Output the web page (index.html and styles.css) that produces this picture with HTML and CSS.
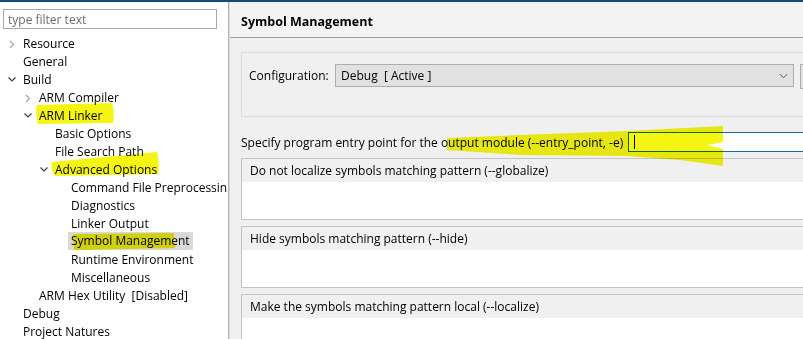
FILE: index.html
```html
<!DOCTYPE html>
<html lang="en">
   <head>
      <meta charset="UTF-8">
      <title>Properties - Symbol Management</title>
      <link rel="stylesheet" href="styles.css">
   </head>
   <body>
      <div class="window">
         <aside class="sidebar">
            <div class="filter">type filter text</div>
            <ul class="tree">
               <li class="node lvl0"><span class="twisty closed"><svg viewBox="0 0 16 16"><polyline points="3,6 6.5,9.5 3,13"/></svg></span>Resource</li>
               <li class="node lvl0"><span class="twisty"></span>General</li>
               <li class="node lvl0"><span class="twisty open"><svg viewBox="0 0 16 16"><polyline points="1.5,6.5 5,10 8.5,6.5"/></svg></span>Build</li>
               <li class="node lvl1"><span class="twisty closed"><svg viewBox="0 0 16 16"><polyline points="3,6 6.5,9.5 3,13"/></svg></span>ARM Compiler</li>
               <li class="node lvl1"><span class="twisty open"><svg viewBox="0 0 16 16"><polyline points="1.5,6.5 5,10 8.5,6.5"/></svg></span>ARM Linker</li>
               <li class="node lvl2"><span class="twisty"></span>Basic Options</li>
               <li class="node lvl2"><span class="twisty"></span>File Search Path</li>
               <li class="node lvl2"><span class="twisty open"><svg viewBox="0 0 16 16"><polyline points="1.5,6.5 5,10 8.5,6.5"/></svg></span>Advanced Options</li>
               <li class="node lvl3"><span class="twisty"></span>Command File Preprocessin</li>
               <li class="node lvl3"><span class="twisty"></span>Diagnostics</li>
               <li class="node lvl3"><span class="twisty"></span>Linker Output</li>
               <li class="node lvl3"><span class="twisty"></span><span class="selected">Symbol Management</span></li>
               <li class="node lvl3"><span class="twisty"></span>Runtime Environment</li>
               <li class="node lvl3"><span class="twisty"></span>Miscellaneous</li>
               <li class="node lvl1"><span class="twisty"></span>ARM Hex Utility&nbsp; [Disabled]</li>
               <li class="node lvl0"><span class="twisty"></span>Debug</li>
               <li class="node lvl0"><span class="twisty"></span>Project Natures</li>
            </ul>
         </aside>
         <main class="page">
            <header class="page-title">Symbol Management</header>
            <section class="config">
               <span class="config-label">Configuration:</span>
               <div class="combo">
                  <span>Debug&nbsp; [ Active ]</span>
                  <svg class="combo-arrow" viewBox="0 0 10 6"><polyline points="1,1 5,5 9,1"/></svg>
               </div>
               <div class="manage-btn"></div>
            </section>
            <div class="entry-row">
               <span>Specify program entry point for the output module (--entry_point, -e)</span>
               <div class="text-input"><span class="caret"></span></div>
            </div>
            <div class="pattern-box">
               <div class="pattern-head">Do not localize symbols matching pattern (--globalize)</div>
               <div class="pattern-body"></div>
            </div>
            <div class="pattern-box">
               <div class="pattern-head">Hide symbols matching pattern (--hide)</div>
               <div class="pattern-body"></div>
            </div>
            <div class="pattern-box">
               <div class="pattern-head">Make the symbols matching pattern local (--localize)</div>
               <div class="pattern-body"></div>
            </div>
         </main>
         <!-- marker pen strokes drawn over the screenshot -->
         <svg class="marker" viewBox="0 0 803 337">
            <path d="M37,103 L112,101 Q115,110 113,121 L38,122 Q35,112 37,103 Z"/>
            <path d="M52,160 L157,150 Q160,162 158,172 L55,174 Q50,167 52,160 Z"/>
            <path d="M73,232 L174,231 L175,246 L74,248 Z"/>
            <path d="M447,136 L520,133 L627,129 L723,124 L723,140 L707,143 L723,147 L723,164 L680,158 L627,154 L520,153 L447,148 Z"/>
         </svg>
      </div>
   </body>
</html>
```

FILE: styles.css
```css
html, body {
margin: 0;
padding: 0;
height: 100%;
overflow: hidden;
}
body {
font-family: "Open Sans", "Noto Sans", Arial, sans-serif;
font-size: 12px;
color: #000;
background-color: #f0f0f0;
border-top: 2px solid #1b4a70;
box-sizing: border-box;
}
.window {
position: relative;
display: flex;
height: 100%;
}
.sidebar {
width: 228px;
flex-shrink: 0;
background-color: #fff;
border-right: 1px solid #b4b4b4;
}
.filter {
margin: 7px 11px 0 3px;
height: 20px;
border: 1px solid #a9a9a9;
color: #6d6d6d;
line-height: 19px;
padding-left: 4px;
box-sizing: border-box;
}
.tree {
list-style: none;
margin: 5px 0 0 0;
padding: 0;
}
.node {
display: flex;
align-items: center;
height: 18px;
white-space: nowrap;
}
.lvl0 { padding-left: 7px; }
.lvl1 { padding-left: 23px; }
.lvl2 { padding-left: 39px; }
.lvl3 { padding-left: 55px; }
.twisty {
width: 16px;
height: 16px;
flex-shrink: 0;
}
.twisty svg {
width: 16px;
height: 16px;
display: block;
fill: none;
stroke-width: 1.2;
}
.closed svg { stroke: #a6a6a6; }
.open svg { stroke: #404040; }
.selected {
background-color: #d9d9d9;
margin-left: -3px;
padding: 0 3px;
line-height: 18px;
}
.page {
flex: 1;
min-width: 0;
overflow: hidden;
border-left: 1px solid #dcdcdc;
}
.page-title {
height: 35px;
line-height: 39px;
padding-left: 11px;
font-weight: bold;
font-size: 12.5px;
background-color: #f3f3f3;
border-bottom: 1px solid #a0a0a0;
}
.config {
display: flex;
align-items: flex-start;
margin: 14px -80px 0 11px;
height: 65px;
border: 1px solid #dcdcdc;
padding: 11px 0 0 7px;
box-sizing: border-box;
}
.config-label {
width: 86px;
flex-shrink: 0;
line-height: 24px;
}
.combo {
width: 459px;
height: 23px;
flex-shrink: 0;
box-sizing: border-box;
border: 1px solid #adadad;
background-color: #e1e1e1;
display: flex;
align-items: center;
justify-content: space-between;
padding: 0 5px 0 5px;
}
.combo-arrow {
width: 9px;
height: 6px;
fill: none;
stroke: #555;
stroke-width: 1.1;
}
.manage-btn {
margin-left: 6px;
width: 80px;
height: 23px;
flex-shrink: 0;
border: 1px solid #adadad;
background-color: #e1e1e1;
}
.entry-row {
display: flex;
align-items: center;
margin: 15px -20px 0 11px;
height: 20px;
}
.text-input {
margin-left: auto;
width: 195px;
height: 20px;
box-sizing: border-box;
border: 1px solid #0f6cb0;
background-color: #fff;
display: flex;
align-items: center;
padding-left: 5px;
}
.caret {
width: 1px;
height: 14px;
background-color: #000;
}
.pattern-box {
margin: 6px -20px 0 11px;
height: 62px;
border: 1px solid #c3c3c3;
box-sizing: border-box;
background-color: #fff;
}
.pattern-box:first-of-type {
margin-top: 7px;
}
.pattern-head {
height: 23px;
line-height: 24px;
padding-left: 8px;
background-color: #f0f0f0;
}
.marker {
position: absolute;
left: 0;
top: 0;
width: 803px;
height: 337px;
pointer-events: none;
mix-blend-mode: multiply;
fill: #f5f514;
}
```
